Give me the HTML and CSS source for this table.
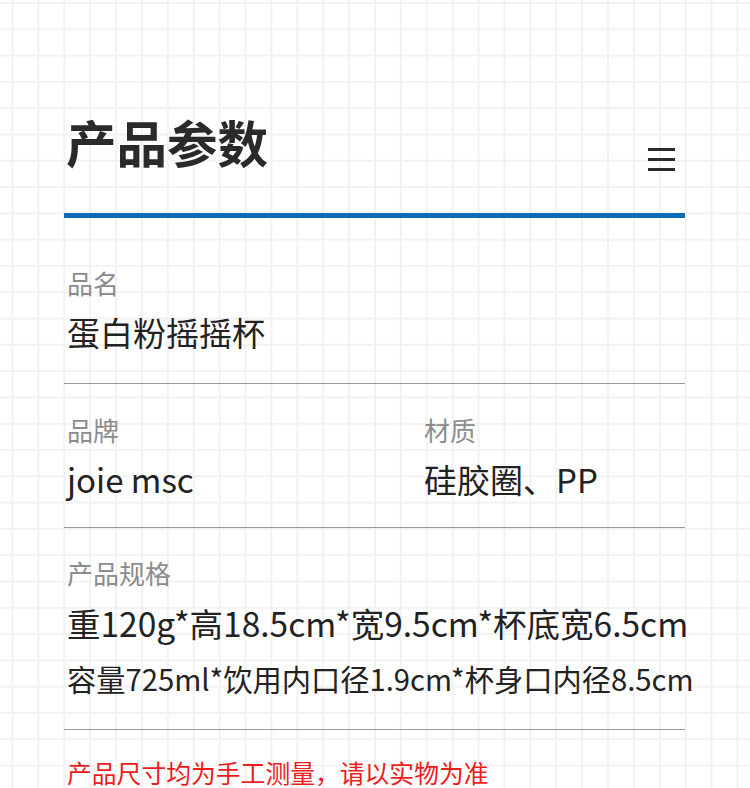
FILE: index.html
```html
<!DOCTYPE html>
<html lang="zh-CN">
    <head>
        <meta charset="UTF-8" />
        <meta name="viewport" content="width=device-width, initial-scale=1.0" />
        <title>产品参数</title>
        <link rel="stylesheet" href="styles.css">
    </head>
    <body>
        <div class="sheet">
            <div class="head">
                <h1 class="title">产品参数</h1>
                <div class="menu">
                    <span></span>
                    <span></span>
                    <span></span>
                </div>
            </div>

            <div class="row row-first">
                <div class="field">
                    <div class="label">品名</div>
                    <div class="value">蛋白粉摇摇杯</div>
                </div>
            </div>

            <div class="row row-split">
                <div class="field">
                    <div class="label">品牌</div>
                    <div class="value">joie msc</div>
                </div>
                <div class="field">
                    <div class="label">材质</div>
                    <div class="value">硅胶圈、PP</div>
                </div>
            </div>

            <div class="row row-spec">
                <div class="field">
                    <div class="label">产品规格</div>
                    <div class="value value-wide">重120g*高18.5cm*宽9.5cm*杯底宽6.5cm</div>
                    <div class="value value-small">容量725ml*饮用内口径1.9cm*杯身口内径8.5cm</div>
                </div>
            </div>

            <p class="note">产品尺寸均为手工测量，请以实物为准</p>
        </div>
    </body>
</html>
```

FILE: styles.css
```css
html {
    --ink: #222222;
    --muted: #8c8c8c;
    --rule: #9a9a9a;
    --blue: #0c6bb2;
    --red: #ee1c1c;
    --grid: #f2f2f2;
}

* {
    box-sizing: border-box;
}

body {
    margin: 0;
    height: 788px;
    overflow: hidden;
    font-family: "Noto Sans CJK SC", "Noto Sans", sans-serif;
    color: var(--ink);
    background-color: #ffffff;
    background-image:
        linear-gradient(to right, var(--grid) 2px, transparent 2px),
        linear-gradient(to bottom, var(--grid) 2px, transparent 2px);
    background-size: 25.9px 26.3px;
    background-position: 11.5px 2px;
}

.sheet {
    padding: 116px 65px 0 64px;
}

.head {
    display: flex;
    justify-content: space-between;
    align-items: flex-start;
    height: 102px;
    border-bottom: 5px solid var(--blue);
}

.title {
    margin: 0 0 0 2px;
    font-size: 50.5px;
    line-height: 50px;
    font-weight: 700;
    color: #2a2a2a;
}

.menu {
    display: flex;
    flex-direction: column;
    gap: 7px;
    width: 27px;
    margin: 32px 10px 0 0;
}

.menu span {
    display: block;
    height: 3px;
    background-color: #2a2a2a;
}

.row {
    padding: 33px 0 31px 3px;
    border-bottom: 1px solid var(--rule);
}

.row-first {
    padding-top: 52px;
    padding-bottom: 34px;
}

.row-split {
    display: grid;
    grid-template-columns: 357px 1fr;
}

.row-spec {
    padding-top: 32px;
    padding-bottom: 36px;
}

.label {
    font-size: 26px;
    line-height: 26px;
    color: var(--muted);
    margin-bottom: 20px;
}

.value {
    font-size: 33px;
    line-height: 33px;
    white-space: nowrap;
}

.value-wide {
    font-size: 33.5px;
}

.value-small {
    font-size: 29.25px;
    line-height: 30px;
    margin-top: 24px;
}

.note {
    margin: 30px 0 0 3px;
    font-size: 24.8px;
    line-height: 25px;
    color: var(--red);
}
```
